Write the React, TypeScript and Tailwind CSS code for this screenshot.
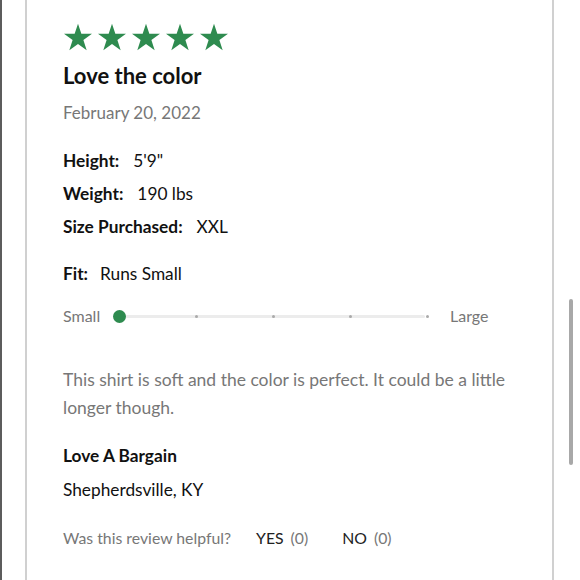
import React from "react";

const Star = () => (
  <svg width="30" height="28" viewBox="0 0 24 23" className="block">
    <path
      d="M12 0.6l2.75 8.3h8.75l-7.07 5.15 2.7 8.35L12 17.25 4.87 22.4l2.7-8.35L0.5 8.9h8.75z"
      fill="#2e8b4f"
    />
  </svg>
);

export default function App() {
  const font = { fontFamily: "Lato, 'Open Sans', sans-serif" };
  return (
    <div className="w-[580px] h-[580px] bg-white flex overflow-hidden" style={font}>
      <div className="w-[2px] h-full bg-[#5c5c5c]" />
      <div className="w-[23px] h-full" />
      <div className="w-[529px] h-full border-x-2 border-[#d0d0d0] pl-[36px] pt-[23px]">
        <div className="flex gap-[4px]">
          <Star />
          <Star />
          <Star />
          <Star />
          <Star />
        </div>
        <div className="mt-[11px] text-[22px] leading-[28px] font-bold text-[#111]">Love the color</div>
        <div className="mt-[11px] text-[17px] leading-[24px] text-[#777]">February 20, 2022</div>

        <div className="mt-[24px] flex flex-col gap-[9px] text-[17.3px] leading-[24px] text-[#111]">
          <div>
            <span className="font-bold">Height:</span>
            <span className="ml-[14px]">5'9"</span>
          </div>
          <div>
            <span className="font-bold">Weight:</span>
            <span className="ml-[14px]">190 lbs</span>
          </div>
          <div>
            <span className="font-bold">Size Purchased:</span>
            <span className="ml-[14px]">XXL</span>
          </div>
          <div className="mt-[14px]">
            <span className="font-bold">Fit:</span>
            <span className="ml-[12px]">Runs Small</span>
          </div>
        </div>

        <div className="mt-[20px] flex items-center h-[20px]">
          <span className="text-[16px] text-[#777] w-[50px]">Small</span>
          <div className="relative w-[322px] h-[14px] flex items-center">
            <div className="absolute left-[6px] right-[10px] h-[3px] bg-[#ececec] rounded-full" />
            <div className="absolute left-[82px] w-[3px] h-[3px] rounded-full bg-[#aaa]" />
            <div className="absolute left-[159px] w-[3px] h-[3px] rounded-full bg-[#aaa]" />
            <div className="absolute left-[236px] w-[3px] h-[3px] rounded-full bg-[#aaa]" />
            <div className="absolute left-[313px] w-[3px] h-[3px] rounded-full bg-[#aaa]" />
            <div className="absolute left-0 w-[13px] h-[13px] rounded-full bg-[#2e8b4f]" />
          </div>
          <span className="ml-[15px] text-[16px] text-[#777]">Large</span>
        </div>

        <p className="mt-[40px] w-[450px] text-[17.5px] leading-[28px] text-[#777]">
          This shirt is soft and the color is perfect. It could be a little longer though.
        </p>

        <div className="mt-[22px] text-[17.3px] leading-[24px] font-bold text-[#111]">Love A Bargain</div>
        <div className="mt-[10px] text-[17.3px] leading-[24px] text-[#111]">Shepherdsville, KY</div>

        <div className="mt-[24px] flex items-center text-[15.8px] leading-[24px]">
          <span className="text-[#777]">Was this review helpful?</span>
          <span className="ml-[25px] text-[#222]">YES</span>
          <span className="ml-[7px] text-[#777]">(0)</span>
          <span className="ml-[34px] text-[#222]">NO</span>
          <span className="ml-[7px] text-[#777]">(0)</span>
        </div>
      </div>
      <div className="flex-1 h-full pt-[299px] pl-[15px]">
        <div className="w-[4px] h-[166px] bg-[#a8a8a8] rounded-full" />
      </div>
    </div>
  );
}
